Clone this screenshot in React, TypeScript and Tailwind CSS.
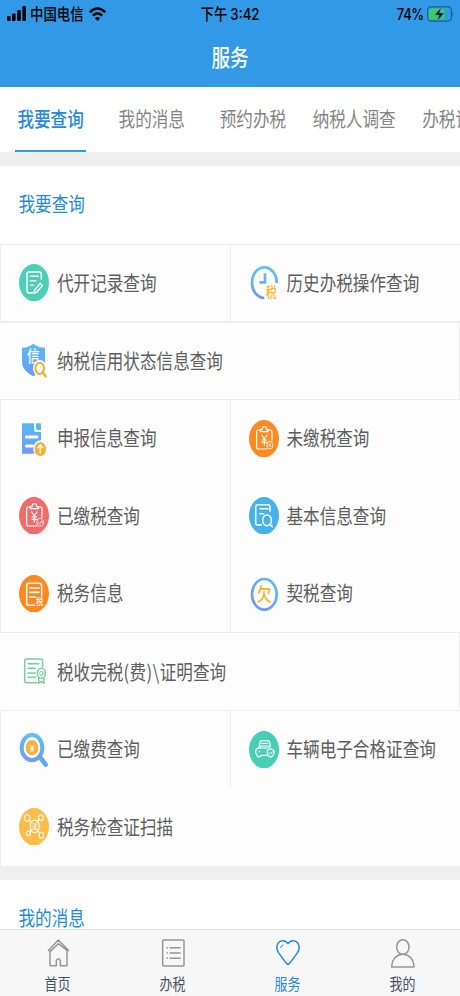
import type { ReactNode } from "react";

type Service = { id: string; label: ReactNode; icon: ReactNode };
type ServiceRow = { items: Service[]; line: string };

const rows: ServiceRow[] = [
  {
    line: "border-t border-l border-[#ededed]",
    items: [
      { id: "record", label: "代开记录查询", icon: <RecordIcon /> },
      { id: "history", label: "历史办税操作查询", icon: <HistoryIcon /> },
    ],
  },
  {
    line: "border-t-2 border-r border-[#ededed]",
    items: [{ id: "credit", label: "纳税信用状态信息查询", icon: <CreditIcon /> }],
  },
  {
    line: "border-t border-l border-[#ededed]",
    items: [
      { id: "declare", label: "申报信息查询", icon: <DeclareIcon /> },
      { id: "unpaid", label: "未缴税查询", icon: <UnpaidIcon /> },
    ],
  },
  {
    line: "border-l border-[#ededed]",
    items: [
      { id: "paid", label: "已缴税查询", icon: <PaidIcon /> },
      { id: "basic", label: "基本信息查询", icon: <BasicIcon /> },
    ],
  },
  {
    line: "border-l border-[#ededed]",
    items: [
      { id: "info", label: "税务信息", icon: <TaxInfoIcon /> },
      { id: "deed", label: "契税查询", icon: <DeedIcon /> },
    ],
  },
  {
    line: "border-t border-r border-[#ededed]",
    items: [
      {
        id: "certificate",
        label: (
          <>
            税收完税<span className="tracking-[0.5px]">(费)\</span>证明查询
          </>
        ),
        icon: <CertificateIcon />,
      },
    ],
  },
  {
    line: "border-t border-l border-[#ededed]",
    items: [
      { id: "fee", label: "已缴费查询", icon: <FeeIcon /> },
      { id: "car", label: "车辆电子合格证查询", icon: <CarIcon /> },
    ],
  },
  { line: "border-l border-[#ededed]", items: [{ id: "scan", label: "税务检查证扫描", icon: <ScanIcon /> }] },
];

const tabs = ["我要查询", "我的消息", "预约办税", "纳税人调查", "办税记录"];

export default function App() {
  return (
    <div className="flex h-[996px] w-[460px] flex-col overflow-hidden bg-[#fdfdfd] font-['Noto_Sans_CJK_SC',sans-serif] text-[#5e5e5e]">
      <header className="h-[87px] shrink-0 bg-[#3299e6]">
        <StatusBar />
        <h1 className="flex h-[56px] items-center justify-center text-[18.6px] font-medium text-white">
          <span className="scale-y-[1.22]">服务</span>
        </h1>
      </header>

      <nav className="flex h-[65px] shrink-0 overflow-hidden bg-white">
        {tabs.map((tab, i) => (
          <div
            key={tab}
            className={
              i === 0
                ? "flex w-[101.2px] shrink-0 flex-col items-center text-[16.6px] font-medium text-[#2589dc]"
                : "flex w-[101.2px] shrink-0 flex-col items-center text-[16.6px] text-[#858585]"
            }
          >
            <span className="flex h-[63px] items-center pt-px whitespace-nowrap">
              <span className="scale-y-[1.22]">{tab}</span>
            </span>
            {i === 0 && <span className="h-[2px] w-[71px] bg-[#3299e6]" />}
          </div>
        ))}
      </nav>

      <div className="h-[14px] shrink-0 bg-[#eeeeee]" />

      <main className="min-h-0 flex-1 overflow-hidden">
        <SectionTitle>我要查询</SectionTitle>
        {rows.map((row) => (
          <div key={row.items[0].id} className={`flex h-[77.75px] ${row.line}`}>
            {row.items.map((item, i) => (
              <div
                key={item.id}
                className={
                  i === 1
                    ? "flex flex-1 items-center gap-[8px] border-l border-[#ededed] pl-[17.5px]"
                    : row.items.length === 2
                      ? "flex w-[229px] items-center gap-[8px] pl-[18px]"
                      : item.id === "scan"
                        ? "flex flex-1 items-center gap-[8px] pl-[18px]"
                        : "flex flex-1 items-center gap-[8.5px] pl-[18.5px]"
                }
              >
                {item.icon}
                <span className="mb-[2px] scale-y-[1.22] text-[16.6px] leading-5 whitespace-nowrap">{item.label}</span>
              </div>
            ))}
          </div>
        ))}
        <div className="h-[14.5px] bg-[#eeeeee]" />
        <SectionTitle>我的消息</SectionTitle>
      </main>

      <footer className="flex h-[67px] shrink-0 border-t border-[#dcdcdc] bg-[#f7f7f8] text-[#4a4f62]">
        <NavItem label="首页">
          <path d="M6 39 37 6 69 39M12 37v46h19V67q6-9 12 0v16h20V37L37 17 12 41" />
        </NavItem>
        <NavItem label="办税">
          <rect x="5" y="6" width="64" height="78" rx="3" />
          <path d="M17 29h4M26 29h33M17 45h4M26 45h33M17 61h4M26 61h33" />
        </NavItem>
        <NavItem label="服务" active>
          <path d="M36 17C29 6 13 5 6 16c-6 10-3 22 3 30l22 30q5 6 10 0l22-30c6-8 9-20 3-30C59 5 43 6 36 17Z" />
          <path d="M14 30q1-8 8-9" strokeWidth="3" />
        </NavItem>
        <NavItem label="我的">
          <ellipse cx="35.500" cy="27" rx="18.500" ry="22" />
          <path d="M2 87h67c-1-25-16-38-33.500-38S3 62 2 87Z" />
        </NavItem>
      </footer>
    </div>
  );
}

function StatusBar() {
  return (
    <div className="grid h-[28px] grid-cols-3 items-center text-[13.4px] leading-4 font-medium text-black">
      <div className="flex items-center gap-[5px] pl-[7px]">
        <svg className="mb-px h-[15px] w-[19px]" viewBox="0 0 19 15" fill="currentColor">
          <rect x="0" y="10" width="3.600" height="5" rx="1" />
          <rect x="5" y="7.500" width="3.600" height="7.500" rx="1" />
          <rect x="10.200" y="4" width="3.600" height="11" rx="1" />
          <rect x="15.400" y="0" width="3.600" height="15" rx="1" />
        </svg>
        <span className="mb-[2px] -ml-px scale-y-[1.2]">中国电信</span>
        <svg className="mb-px h-[14px] w-[17px]" viewBox="0 0 17 14" fill="none" stroke="currentColor" strokeWidth="2.600">
          <path d="M.8 5.200Q8.500-2.200 16.200 5.200M3.800 8.600q4.700-4.400 9.400 0" />
          <path d="M8.500 14 5.800 11.200q2.700-2.200 5.400 0Z" fill="currentColor" stroke="none" />
        </svg>
      </div>
      <div className="mb-[2px] scale-y-[1.2] text-center whitespace-nowrap">
        下午 <span className="font-['Inter',sans-serif] text-[13.2px]">3:42</span>
      </div>
      <div className="flex items-center justify-end gap-[3px] pr-[6px]">
        <span className="mb-px scale-y-[1.2] font-['Inter',sans-serif] text-[13px] tracking-[-0.3px]">74%</span>
        <svg className="mb-px h-[16px] w-[27px]" viewBox="0 0 27 16" fill="none">
          <rect x=".6" y=".9" width="23.800" height="14.200" rx="3.500" stroke="#1d5e91" strokeWidth="1.100" />
          <rect x="2" y="2.500" width="15.500" height="11" rx="2" fill="#3bcb62" />
          <path d="M25.500 5.500q1.600 2.500 0 5Z" fill="#1d5e91" />
          <path d="M14.500 1 7.800 9h4.400l-2 6 6.900-8h-4.600Z" fill="#000" stroke="#3299e6" strokeWidth=".7" />
        </svg>
      </div>
    </div>
  );
}

function SectionTitle({ children }: { children: ReactNode }) {
  return (
    <h2 className="flex h-[77.5px] items-center bg-white pl-[18.5px] text-[16.6px] leading-5 text-[#2589dc]">
      <span className="mb-[4px] scale-y-[1.22] leading-4">{children}</span>
    </h2>
  );
}

function NavItem({ label, active, children }: { label: string; active?: boolean; children: ReactNode }) {
  return (
    <div className={active ? "flex flex-1 flex-col items-center pt-[8px] text-[#2589dc]" : "flex flex-1 flex-col items-center pt-[8px]"}>
      <svg
        className="h-[30px] w-[24px]"
        viewBox="0 0 72 90"
        fill="none"
        stroke={active ? "#2589dc" : "#969696"}
        strokeWidth="4.500"
        strokeLinejoin="round"
      >
        {children}
      </svg>
      <span className="mt-[8px] scale-y-[1.22] text-[13px] leading-4">{label}</span>
    </div>
  );
}

// Every service icon is drawn on a 90x112 board.
function Glyph({ children, disc }: { children: ReactNode; disc?: string }) {
  return (
    <svg
      className="h-[37.3px] w-[30px] shrink-0"
      viewBox="0 0 90 112"
      fill="none"
      stroke="#fff"
      strokeWidth="4.500"
      strokeLinecap="round"
      strokeLinejoin="round"
    >
      {disc && <ellipse cx="45" cy="56" rx="45" ry="56" fill={disc} stroke="none" />}
      {children}
    </svg>
  );
}

function Char({ x, y, size, fill, children }: { x: number; y: number; size: number; fill: string; children: string }) {
  return (
    <text
      transform={`translate(${x} ${y}) scale(1 1.23)`}
      y={size * 0.37}
      textAnchor="middle"
      fontSize={size}
      fontWeight="500"
      fill={fill}
      stroke="none"
    >
      {children}
    </text>
  );
}

function RecordIcon() {
  return (
    <Glyph disc="#4dcfb5">
      <path d="M67 46V31q0-7-6-7H30q-6 0-6 7v49q0 7 6 7h10M34 37h24M34 50h16M34 64h8" />
      <path d="m47 78 17-20 6 7-17 20-8 2Z" />
    </Glyph>
  );
}

function HistoryIcon() {
  return (
    <Glyph>
      <linearGradient id="clock" x1="0" y1="0" x2="0" y2="1">
        <stop stopColor="#5cc0f7" />
        <stop offset="1" stopColor="#6f96f9" />
      </linearGradient>
      <path d="M83 57A37 46 0 1 0 46 102" stroke="url(#clock)" strokeWidth="8" strokeLinecap="butt" />
      <path d="M48 28v27H31" stroke="#6fb2f5" strokeWidth="8" strokeLinecap="butt" strokeLinejoin="miter" />
      <Char x={67} y={85} size={33} fill="#fbb32f">税</Char>
    </Glyph>
  );
}

function CreditIcon() {
  return (
    <Glyph>
      <linearGradient id="shield" x1="0" y1="0" x2="0" y2="1">
        <stop stopColor="#5bbcf6" />
        <stop offset="1" stopColor="#7198f8" />
      </linearGradient>
      <path d="M43 5Q58 17 78 17v42c0 24-20 35-35 44C28 94 9 83 9 59V17Q28 17 43 5Z" fill="url(#shield)" stroke="none" />
      <Char x={43} y={43} size={38} fill="#fff">信</Char>
      <ellipse cx="62" cy="79" rx="20" ry="25" fill="#fff" stroke="none" />
      <ellipse cx="62" cy="79" rx="13" ry="17" stroke="#f9ab2d" strokeWidth="6" />
      <path d="m71 92 9 11" stroke="#f9ab2d" strokeWidth="7" />
    </Glyph>
  );
}

function DeclareIcon() {
  return (
    <Glyph>
      <linearGradient id="file" x1="0" y1="0" x2="0" y2="1">
        <stop stopColor="#55b9f5" />
        <stop offset="1" stopColor="#7199f8" />
      </linearGradient>
      <path d="M11 10h34v18q0 8 7 8h14v65H11q-2 0-2-3V13q0-3 2-3Z" fill="url(#file)" stroke="none" />
      <path d="M51 10h12q3 0 3 3v17H56q-5 0-5-6Z" fill="#5bb9f6" stroke="none" />
      <path d="M22 51h32M22 78h18" strokeWidth="9" />
      <ellipse cx="64" cy="87" rx="21" ry="26" fill="#fff" stroke="none" />
      <ellipse cx="64" cy="87" rx="17" ry="21" fill="#f9ad2c" stroke="none" />
      <path d="M64 99V75M57 83l7-9 7 9" strokeWidth="4.500" />
    </Glyph>
  );
}

function Clipboard() {
  return (
    <>
      <path d="M53 87H27q-4 0-4-4V34q0-4 4-4h7M57 30h8q4 0 4 4v27" strokeWidth="3.500" />
      <path d="M34 35v-6h5c0-12 14-12 14 0h5v6Z" strokeWidth="3.500" />
      <path d="m38 45 8 12 8-12M46 57v18M39 60h14M39 67h14" strokeWidth="3.500" />
    </>
  );
}

function UnpaidIcon() {
  return (
    <Glyph disc="#fd8a22">
      <Clipboard />
      <rect x="54" y="65" width="17" height="21" rx="6" fill="#fd8a22" strokeWidth="2.500" />
      <path d="m59 71 7 9M66 71l-7 9" strokeWidth="2.500" />
    </Glyph>
  );
}

function PaidIcon() {
  return (
    <Glyph disc="#f06c6c">
      <Clipboard />
      <ellipse cx="63" cy="76" rx="10" ry="12" fill="#f06c6c" strokeWidth="2.500" />
      <path d="m58 76 4 5 7-9" strokeWidth="2.500" />
    </Glyph>
  );
}

function BasicIcon() {
  return (
    <Glyph disc="#45b2ec">
      <path d="M63 43V30q0-7-6-7H26q-6 0-6 7v47q0 7 6 7h11M33 35h24M33 50h11" />
      <ellipse cx="54" cy="70" rx="13" ry="16" />
      <path d="m63 82 7 7" />
    </Glyph>
  );
}

function TaxInfoIcon() {
  return (
    <Glyph disc="#fd8920">
      <path d="M47 91H29q-6 0-6-7V32q0-7 6-7h33q6 0 6 7v32" />
      <path d="M33 39h27M33 52h27M33 66h16" strokeWidth="5" />
      <Char x={62} y={81} size={22} fill="#fff">税</Char>
    </Glyph>
  );
}

function DeedIcon() {
  return (
    <Glyph>
      <linearGradient id="ring" x1="1" y1="0" x2="0" y2="1">
        <stop stopColor="#59bcf7" />
        <stop offset="1" stopColor="#7593f8" />
      </linearGradient>
      <ellipse cx="46" cy="58" rx="37" ry="46" stroke="url(#ring)" strokeWidth="8" />
      <Char x={46} y={57} size={45} fill="#fbb22f">欠</Char>
    </Glyph>
  );
}

function CertificateIcon() {
  return (
    <Glyph>
      <g stroke="#79cda3">
        <path d="M54 89H22q-5 0-5-6V24q0-6 5-6h44q5 0 5 6v17M27 32h32M27 46h22M27 60h22M27 73h22" />
        <ellipse cx="67" cy="61" rx="12" ry="15" />
        <ellipse cx="67" cy="61" rx="5" ry="7" strokeWidth="3" />
        <path d="M59 76v15l8-6 8 6V76" />
      </g>
    </Glyph>
  );
}

function FeeIcon() {
  return (
    <Glyph>
      <linearGradient id="lens" x1="0" y1="0" x2="0" y2="1">
        <stop stopColor="#5bc1f2" />
        <stop offset="1" stopColor="#6c9ef8" />
      </linearGradient>
      <path d="m64 80 16 21" stroke="#6ca3fa" strokeWidth="14" />
      <ellipse cx="39" cy="50" rx="31" ry="38" fill="#fff" stroke="url(#lens)" strokeWidth="12" />
      <ellipse cx="39" cy="50" rx="19" ry="23" fill="#fbb038" stroke="none" />
      <path d="m33 42 6 8 6-8M39 50v12M33 52h12M34 57h10" strokeWidth="3" />
    </Glyph>
  );
}

function CarIcon() {
  return (
    <Glyph disc="#49cdb5">
      <g strokeWidth="3.500">
        <path d="m30 52 3-18q1-5 5-5h18q5 0 6 5l2 12M38 37h18M33 52l3-7h22l3 5" />
        <path d="M54 73H38M25 73v4h9l2-4M24 71q-4-2-4-8 0-12 10-12h27M31 60v3" />
        <path d="m65 53 10 5v9q0 6-10 12-10-6-10-12v-9Z" />
        <path d="m61 65 4 4 6-7" strokeWidth="3" />
      </g>
    </Glyph>
  );
}

function ScanIcon() {
  return (
    <Glyph disc="#ffbc48">
      <g strokeWidth="3.200">
        <path d="m31 36 7 8M60 35l-6 9M33 71l6-7M54 65l8 10" />
        <ellipse cx="25" cy="30" rx="8" ry="10" />
        <ellipse cx="66" cy="29" rx="7" ry="9" />
        <ellipse cx="28" cy="76" rx="6" ry="7" />
        <ellipse cx="67" cy="82" rx="7" ry="9" />
        <path d="m39 39 8-3 8 3 5 9v14l-5 9-8 3-8-3-5-9V48Z" />
      </g>
      <Char x={47} y={55} size={17} fill="#fff">法</Char>
    </Glyph>
  );
}
